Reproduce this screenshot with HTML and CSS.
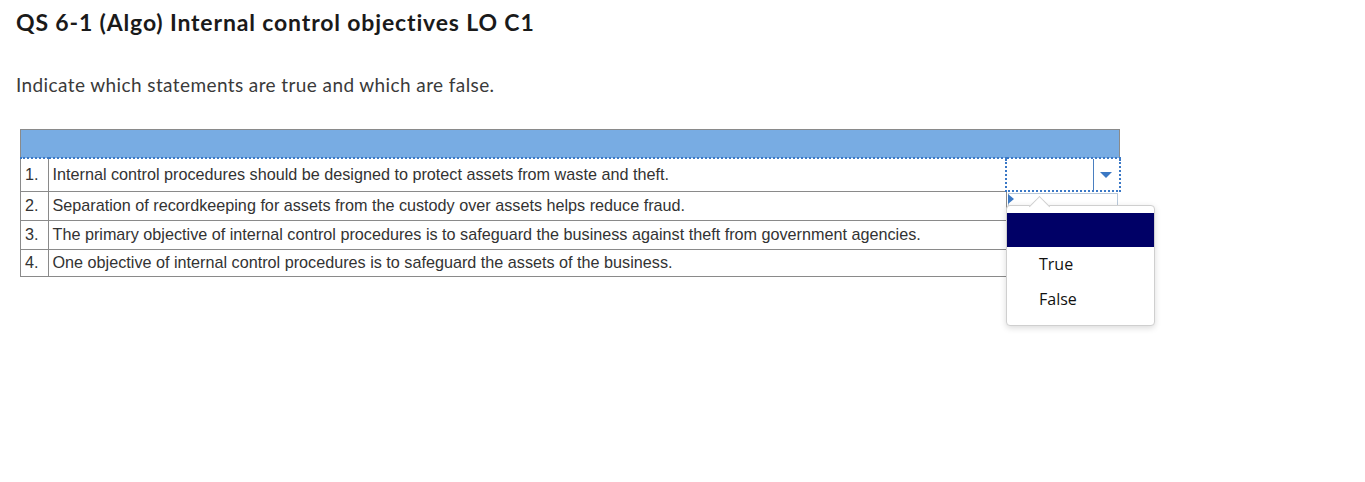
FILE: index.html
```html
<!DOCTYPE html>
<html lang="en">
<head>
  <meta charset="UTF-8" />
  <title>QS 6-1 (Algo) Internal control objectives LO C1</title>
  <link rel="stylesheet" href="styles.css">
</head>
<body>
  <div class="page">
    <h1>QS 6-1 (Algo) Internal control objectives LO C1</h1>
    <p class="prompt">Indicate which statements are true and which are false.</p>

    <div class="quiz">
      <table class="statements">
        <tr class="head">
          <th class="num"></th>
          <th class="text"></th>
          <th class="answer"></th>
        </tr>
        <tr class="row first">
          <td class="num">1.</td>
          <td class="text">Internal control procedures should be designed to protect assets from waste and theft.</td>
          <td class="answer focused">
            <div class="select">
              <span class="value"></span>
              <span class="arrow"></span>
            </div>
          </td>
        </tr>
        <tr class="row second">
          <td class="num">2.</td>
          <td class="text">Separation of recordkeeping for assets from the custody over assets helps reduce fraud.</td>
          <td class="answer">
            <div class="select open"><span class="marker"></span></div>
          </td>
        </tr>
        <tr class="row">
          <td class="num">3.</td>
          <td class="text">The primary objective of internal control procedures is to safeguard the business against theft from government agencies.</td>
          <td class="answer"></td>
        </tr>
        <tr class="row last">
          <td class="num">4.</td>
          <td class="text">One objective of internal control procedures is to safeguard the assets of the business.</td>
          <td class="answer"></td>
        </tr>
      </table>

      <div class="popup">
        <span class="caret"></span>
        <ul class="options">
          <li class="option selected"></li>
          <li class="option">True</li>
          <li class="option">False</li>
        </ul>
      </div>
    </div>
  </div>
</body>
</html>
```

FILE: styles.css
```css
body {
  margin: 0;
  min-height: 482px;
  background: #fff;
  color: #222;
}
.page {
  padding: 0 16px 160px;
}
h1 {
  font-family: Lato, 'Open Sans', sans-serif;
  font-weight: 700;
  font-size: 23px;
  letter-spacing: 0.85px;
  line-height: 28px;
  margin: 8px 0 0;
  color: #1a1a1a;
}
.prompt {
  font-family: Lato, 'Open Sans', sans-serif;
  font-size: 19px;
  letter-spacing: 0.4px;
  line-height: 24px;
  margin: 37px 0 0;
  color: #3a3a3a;
}
.quiz {
  position: relative;
  margin: 32px 0 0 4px;
}
.statements {
  border-collapse: collapse;
  font-family: 'Liberation Sans', Arial, sans-serif;
  font-size: 16.2px;
  color: #333;
  table-layout: fixed;
  width: 1100px;
}
.statements th,
.statements td {
  padding: 0;
}
.head th {
  height: 27px;
  background: #78ace3;
  border-top: 1px solid #8a8a8a;
  border-bottom: 2px dotted #3a78c6;
}
.head th.num {
  border-left: 1px solid #8a8a8a;
}
.head th.answer {
  border-right: 1px solid #8a8a8a;
}
th.num { width: 27px; }
th.text { width: 958px; }
th.answer { width: 113px; }
.row td.num,
.row td.text {
  border: 1px solid #8a8a8a;
  border-top: none;
  height: 28px;
  vertical-align: middle;
}
.row td.num {
  padding-left: 4px;
}
.row td.text {
  padding-left: 4px;
}
.row.first td.num,
.row.first td.text {
  height: 31px;
}
.row.last td.num,
.row.last td.text {
  height: 26px;
}
td.answer {
  vertical-align: top;
}
td.focused {
  border: 2px dotted #3a78c6;
  border-top: none;
}
.select {
  display: flex;
  height: 31px;
}
.select .value {
  flex: 1;
  border-right: 1px solid #4a7fc0;
}
.select .arrow {
  width: 25px;
  display: flex;
  align-items: center;
  justify-content: center;
}
.select .arrow::before {
  content: '';
  border-left: 6px solid transparent;
  border-right: 6px solid transparent;
  border-top: 6px solid #3b78c4;
  margin-top: 1px;
}
.select.open {
  position: relative;
  height: 26px;
  margin: 1px 2px 0 1px;
  border: 1px solid #b9c9da;
  border-bottom: none;
  box-sizing: border-box;
}
.select .marker {
  position: absolute;
  left: -1px;
  top: 0;
  border-top: 5px solid transparent;
  border-bottom: 5px solid transparent;
  border-left: 6px solid #3b78c4;
}
.popup {
  position: absolute;
  left: 986px;
  top: 76px;
  width: 147px;
  height: 119px;
  background: #fff;
  border: 1px solid #cfcfcf;
  border-radius: 4px;
  box-shadow: 0 2px 6px rgba(0, 0, 0, 0.15);
  font-family: 'Open Sans', 'Noto Sans', sans-serif;
  font-size: 16px;
  color: #111;
  z-index: 2;
}
.caret {
  position: absolute;
  left: 25px;
  top: -7px;
  width: 14px;
  height: 14px;
  background: #fff;
  border-top: 1px solid #cfcfcf;
  border-left: 1px solid #cfcfcf;
  transform: rotate(45deg);
}
.options {
  list-style: none;
  margin: 0;
  padding: 7px 0 0;
  position: relative;
}
.option {
  height: 35px;
  line-height: 35px;
  padding-left: 32px;
}
.option.selected {
  height: 34px;
  background: #000066;
}
```
